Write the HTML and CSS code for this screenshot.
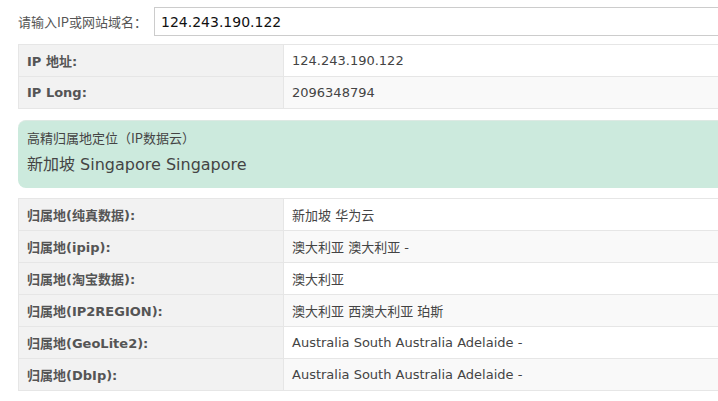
FILE: index.html
```html
<!DOCTYPE html>
<html lang="zh-CN">
<head>
  <meta charset="UTF-8">
  <title>IP查询</title>
  <link rel="stylesheet" href="styles.css">
</head>
<body>
  <div class="page">
    <div class="search-row">
      <label for="ip">请输入IP或网站域名：</label>
      <input type="text" id="ip" value="124.243.190.122">
    </div>

    <table class="info-table">
      <tr><th>IP 地址:</th><td>124.243.190.122</td></tr>
      <tr><th>IP Long:</th><td>2096348794</td></tr>
    </table>

    <div class="geo-box">
      <div class="geo-title">高精归属地定位（IP数据云）</div>
      <div class="geo-result">新加坡 Singapore Singapore</div>
    </div>

    <table class="info-table">
      <tr><th>归属地(纯真数据):</th><td>新加坡 华为云</td></tr>
      <tr><th>归属地(ipip):</th><td>澳大利亚 澳大利亚 -</td></tr>
      <tr><th>归属地(淘宝数据):</th><td>澳大利亚</td></tr>
      <tr><th>归属地(IP2REGION):</th><td>澳大利亚 西澳大利亚 珀斯</td></tr>
      <tr><th>归属地(GeoLite2):</th><td>Australia South Australia Adelaide -</td></tr>
      <tr><th>归属地(DbIp):</th><td>Australia South Australia Adelaide -</td></tr>
    </table>
  </div>
</body>
</html>
```

FILE: styles.css
```css
html {
  overflow: hidden;
}

body {
  margin: 0;
  font-family: 'DejaVu Sans', 'Noto Sans CJK SC', sans-serif;
  font-size: 13px;
  color: #444;
  background: #fff;
}

.page {
  width: 760px;
  padding: 7px 0 0 18px;
}

.search-row {
  display: flex;
  align-items: center;
  height: 29px;
}

.search-row label {
  flex-shrink: 0;
  width: 136px;
  white-space: nowrap;
  font-family: 'Noto Sans CJK SC', sans-serif;
  font-size: 13px;
  color: #555;
}

.search-row input {
  flex: 1;
  height: 29px;
  box-sizing: border-box;
  border: 1px solid #ccc;
  padding: 0 6px;
  font-family: 'DejaVu Sans', sans-serif;
  font-size: 14px;
  color: #111;
  outline: none;
}

.info-table {
  width: 100%;
  border-collapse: collapse;
  margin-top: 8px;
}

.info-table th,
.info-table td {
  height: 31px;
  padding: 0 8px;
  border: 1px solid #e6e6e6;
  text-align: left;
}

.info-table th {
  width: 248px;
  background: #f2f2f2;
  font-weight: bold;
  color: #555;
}

.info-table td {
  color: #444;
}

.info-table tr:nth-child(even) td {
  background: #f9f9f9;
}

.geo-box {
  margin: 11px 0 10px;
  height: 68px;
  box-sizing: border-box;
  padding: 7px 9px;
  background: #cceadd;
  border-top: 1px solid #dde9e3;
  border-radius: 8px 0 0 8px;
  font-family: 'Noto Sans CJK SC', sans-serif;
}

.geo-title {
  font-size: 13px;
  color: #444;
  line-height: 20px;
}

.geo-result {
  margin-top: 5px;
  font-family: 'DejaVu Sans', 'Noto Sans CJK SC', sans-serif;
  font-size: 16px;
  color: #444;
  line-height: 24px;
}
```
